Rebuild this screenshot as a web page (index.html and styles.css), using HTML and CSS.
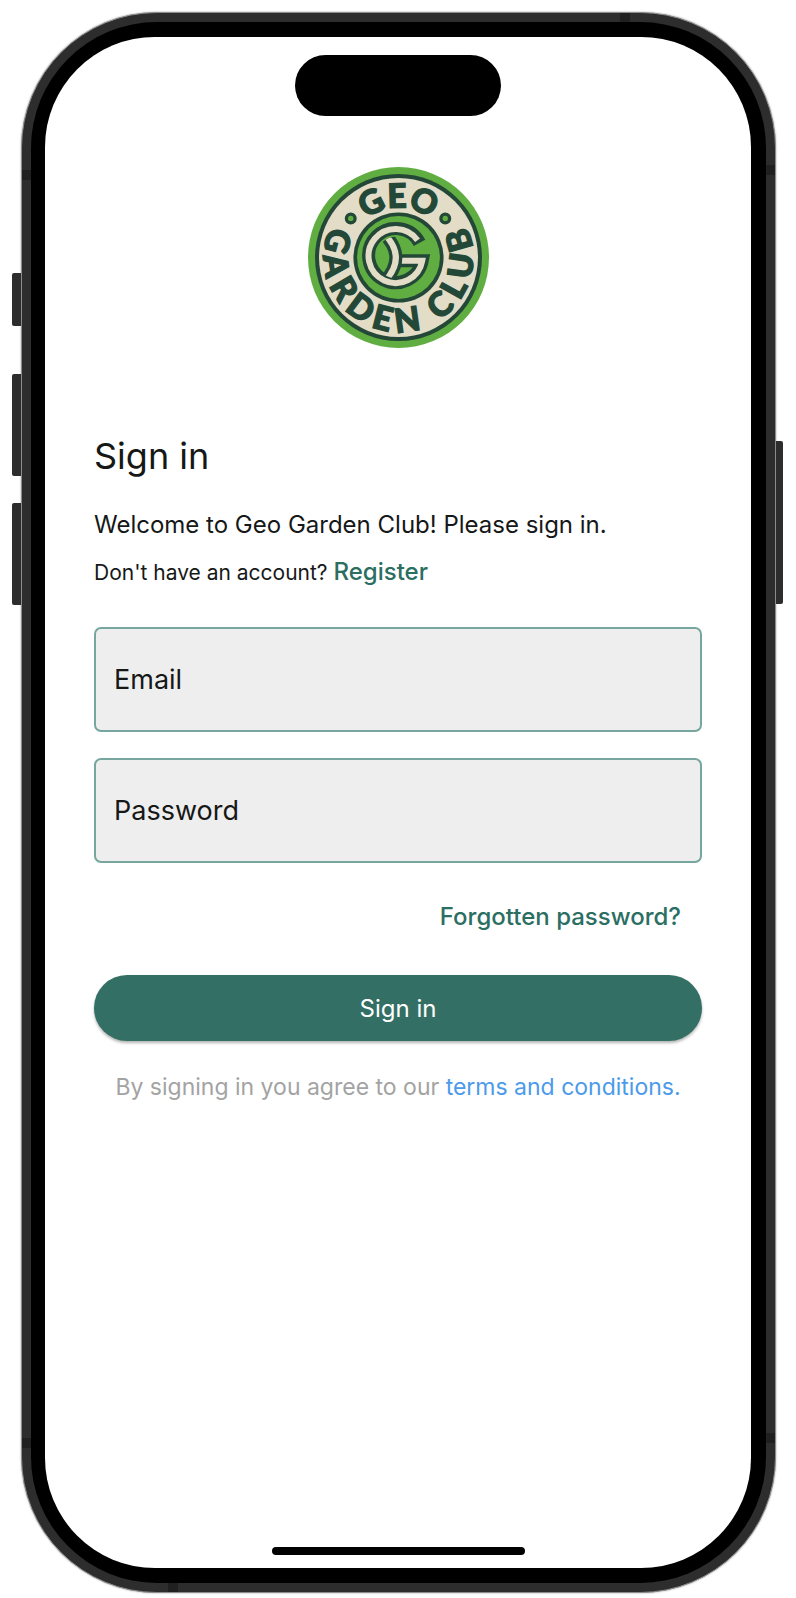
FILE: index.html
```html
<!DOCTYPE html>
<html lang="en">
<head>
<meta charset="utf-8">
<meta name="viewport" content="width=device-width, initial-scale=1">
<title>Geo Garden Club - Sign in</title>
<link rel="stylesheet" href="styles.css">
</head>
<body>
<div class="phone">
  <i class="key key-action"></i>
  <i class="key key-up"></i>
  <i class="key key-down"></i>
  <i class="key key-power"></i>
  <i class="seam seam-left seam-high"></i>
  <i class="seam seam-left seam-low"></i>
  <i class="seam seam-right seam-high"></i>
  <i class="seam seam-right seam-low"></i>
  <i class="seam seam-top"></i>
  <i class="seam seam-bottom"></i>
  <div class="bezel">
    <main class="screen">
      <div class="island"></div>
      <svg class="logo" viewBox="54 50 542 542" role="img" aria-label="Geo Garden Club">
        <defs>
          <path id="arc-top" d="M176 321A149 149 0 0 1 474 321"/>
          <path id="arc-bottom" d="M174 155A224 224 0 1 0 476 155"/>
          <clipPath id="inner"><circle cx="320" cy="321" r="63"/></clipPath>
        </defs>
        <circle class="green" cx="325" cy="321" r="271"/>
        <circle class="dark" cx="325" cy="321" r="250"/>
        <circle class="sand" cx="325" cy="321" r="238"/>
        <circle class="dark" cx="325" cy="321" r="135"/>
        <circle class="green" cx="325" cy="321" r="124"/>
        <g class="dot"><circle cx="182" cy="204" r="13"/><circle cx="465" cy="204" r="13"/></g>
        <text class="seal"><textPath href="#arc-top" startOffset="50%" text-anchor="middle">GEO</textPath></text>
        <text class="seal" dx="0 18 20 20 20 20 20 14 20 21 21"><textPath href="#arc-bottom" startOffset="92">GARDEN CLUB</textPath></text>
        <path class="edge" d="M388 277A81 81 0 1 0 396 331H322"/>
        <path class="fill" d="M382 269A81 81 0 1 0 396 331H322"/>
        <g clip-path="url(#inner)">
          <path class="edge" d="M284 252Q350 321 284 392"/>
          <path class="fill" d="M284 252Q350 321 284 392"/>
        </g>
      </svg>
      <form class="form">
        <h1 class="title">Sign in</h1>
        <p class="welcome">Welcome to Geo Garden Club! Please sign in.</p>
        <p class="account">Don't have an account? <a class="link" href="#register">Register</a></p>
        <div class="field">
          <label for="email">Email</label>
          <input id="email" type="email">
        </div>
        <div class="field">
          <label for="password">Password</label>
          <input id="password" type="password">
        </div>
        <a class="link forgot" href="#forgot">Forgotten password?</a>
        <button class="submit" type="submit">Sign in</button>
        <p class="terms">By signing in you agree to our <a href="#terms">terms and conditions.</a></p>
      </form>
      <div class="home"></div>
    </main>
  </div>
</div>
</body>
</html>
```
FILE: styles.css
```css
* { box-sizing: border-box; }

body {
  margin: 0;
  min-height: 100vh;
  display: flex;
  padding: 12px 20px 5px 21px;
  background: #fff;
  color: #161818;
  font-family: Inter, "Liberation Sans", sans-serif;
  font-size: 24px;
}

.phone {
  position: relative;
  flex: 1;
  display: flex;
  padding: 9px;
  border: 1px solid #8c8c8c;
  border-radius: 136px;
  background: #2d2d2d;
  box-shadow: 0 0 2px #999;
}

.bezel {
  flex: 1;
  display: flex;
  padding: 15px 15px 15px 14px;
  border-radius: 126px;
  background: #000;
}

.screen {
  flex: 1;
  display: flex;
  flex-direction: column;
  align-items: center;
  padding: 18px 49px 13px;
  border-radius: 110px;
  background: #fff;
}

.key, .seam { position: absolute; }
.key { width: 9px; background: #2d2d2d; border-radius: 2px 0 0 2px; left: -10px; }
.key-action { top: 260px; height: 53px; }
.key-up { top: 361px; height: 102px; }
.key-down { top: 490px; height: 102px; }
.key-power { left: auto; right: -8px; top: 428px; height: 163px; width: 7px; border-radius: 0 2px 2px 0; }

.seam { width: 9px; height: 10px; background: #202020; }
.seam-left { left: 0; }
.seam-right { right: 0; }
.seam-left.seam-high { top: 157px; }
.seam-right.seam-high { top: 152px; }
.seam-left.seam-low { bottom: 144px; }
.seam-right.seam-low { bottom: 149px; }
.seam-top { top: 0; right: 145px; width: 10px; height: 9px; }
.seam-bottom { bottom: 0; left: 146px; width: 10px; height: 9px; }

.island {
  width: 206px;
  height: 61px;
  border-radius: 31px;
  background: #000;
}

.logo { width: 181px; height: 181px; margin-top: 51px; }
.green { fill: #60ae41; }
.dark { fill: #234838; }
.sand { fill: #e3ddc7; }
.dot { fill: #60ae41; stroke: #234838; stroke-width: 10px; }
.seal { fill: #234838; stroke: #234838; stroke-width: 4px; font: 900 100px Lato, sans-serif; }
.edge { fill: none; stroke: #234838; stroke-width: 39px; }
.fill { fill: none; stroke: #e3ddc7; stroke-width: 18px; }

.form {
  align-self: stretch;
  display: flex;
  flex-direction: column;
  margin-top: 84px;
}

.title { margin: 0; font-size: 36px; line-height: 48px; font-weight: 400; }
.welcome { margin: 31px 0 0; line-height: 28px; }
.account { margin: 17px 0 38px; font-size: 21px; line-height: 32px; }

.link { color: #2b6e62; font-size: 24px; font-weight: 500; text-decoration: none; }

.field {
  display: grid;
  align-items: center;
  height: 105px;
  margin-bottom: 26px;
}
.field label, .field input { grid-area: 1 / 1; }
.field label { z-index: 1; justify-self: start; padding-left: 20px; font-size: 27px; }
.field input {
  width: 100%;
  height: 100%;
  padding: 0 20px;
  border: 2px solid #77a69f;
  border-radius: 7px;
  background: #eee;
  font: inherit;
}

.forgot { align-self: flex-end; margin: 14px 21px 44px 0; line-height: 28px; }

.submit {
  height: 66px;
  border: 0;
  border-radius: 33px;
  background: #336f64;
  box-shadow: 0 2px 3px rgba(0, 0, 0, 0.3);
  color: #fff;
  font: inherit;
}

.terms { margin: 32px 0 0; font-size: 23px; line-height: 28px; text-align: center; color: #a3a3a3; }
.terms a { color: #4c9aea; text-decoration: none; }

.home {
  width: 253px;
  height: 8px;
  margin-top: auto;
  border-radius: 4px;
  background: #000;
}
```
